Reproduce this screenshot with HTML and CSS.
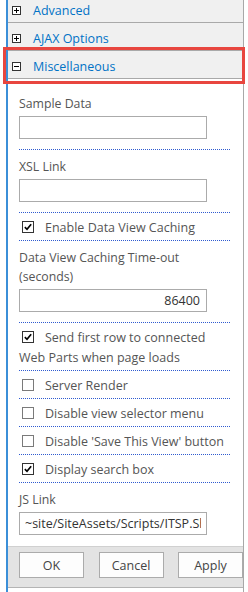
FILE: index.html
```html
<!DOCTYPE html>
<html lang="en">
<head>
    <meta charset="UTF-8">
    <title>Web Part Properties</title>
    <link rel="stylesheet" href="styles.css">
</head>
<body>
    <div class="panel">
        <div class="section-head">
            <span class="toggle"><svg viewBox="0 0 9 9"><path d="M2 4.5 H7 M4.5 2 V7" /></svg></span>
            <span class="section-title">Advanced</span>
        </div>
        <div class="section-head">
            <span class="toggle"><svg viewBox="0 0 9 9"><path d="M2 4.5 H7 M4.5 2 V7" /></svg></span>
            <span class="section-title">AJAX Options</span>
        </div>
        <div class="section-head selected">
            <span class="toggle"><svg viewBox="0 0 9 9"><path d="M2 4.5 H7" /></svg></span>
            <span class="section-title">Miscellaneous</span>
        </div>

        <div class="section-body">
            <div class="field">
                <div class="label">Sample Data</div>
                <input class="text-input" type="text">
            </div>
            <div class="field">
                <div class="label">XSL Link</div>
                <input class="text-input" type="text">
            </div>
            <div class="check-row">
                <span class="check on"><svg viewBox="0 0 12 12"><path d="M2.2 6.2 L4.8 8.8 L9.8 2.6" /></svg></span>Enable Data View Caching
            </div>
            <div class="field">
                <div class="label">Data View Caching Time-out (seconds)</div>
                <input class="text-input num" type="text" value="86400">
            </div>
            <div class="check-row">
                <span class="check on"><svg viewBox="0 0 12 12"><path d="M2.2 6.2 L4.8 8.8 L9.8 2.6" /></svg></span>Send first row to connected Web Parts when page loads
            </div>
            <div class="check-row">
                <span class="check"></span>Server Render
            </div>
            <div class="check-row">
                <span class="check"></span>Disable view selector menu
            </div>
            <div class="check-row">
                <span class="check"></span>Disable 'Save This View' button
            </div>
            <div class="check-row">
                <span class="check on"><svg viewBox="0 0 12 12"><path d="M2.2 6.2 L4.8 8.8 L9.8 2.6" /></svg></span>Display search box
            </div>
            <div class="field last">
                <div class="label">JS Link</div>
                <input class="text-input" type="text" value="~site/SiteAssets/Scripts/ITSP.SharePoint.js">
            </div>
        </div>

        <div class="button-bar">
            <button type="button">OK</button>
            <button type="button">Cancel</button>
            <button type="button">Apply</button>
        </div>
        <div class="tail"></div>
    </div>
</body>
</html>
```

FILE: styles.css
```css
body {
    margin: 0;
    background-color: #ffffff;
    font-family: "Open Sans", "Noto Sans", sans-serif;
    font-size: 12px;
    color: #444444;
    overflow: hidden;
}
.panel {
    margin-top: -5px;
    margin-left: 6px;
    width: 235px;
    border-left: 2px solid #3b8fd8;
    border-right: 1px solid #a8a8a8;
}
.section-head {
    position: relative;
    display: flex;
    align-items: center;
    height: 24px;
    padding: 3px 0 0 4px;
    background-color: #f0f0f0;
    border-bottom: 1px solid #a9a9a9;
}
.section-head.selected::after {
    content: "";
    position: absolute;
    top: -4px;
    bottom: -6px;
    left: -5px;
    right: -2px;
    border: 3px solid #e8463f;
}
.toggle {
    display: block;
    width: 9px;
    height: 9px;
    margin-right: 12px;
}
.toggle svg {
    display: block;
    width: 9px;
    height: 9px;
    background-color: #ffffff;
    box-shadow: inset 0 0 0 1px #333333;
}
.toggle svg path {
    fill: none;
    stroke: #000000;
    stroke-width: 1;
}
.section-title {
    font-size: 12.5px;
    color: #0072c6;
}
.section-body {
    padding: 8px 13px 0 11px;
}
.field {
    padding: 7px 0 10px;
    border-bottom: 1px dotted #2f5bd0;
}
.field.last {
    border-bottom: none;
    padding-bottom: 11px;
}
.label {
    font-size: 12.3px;
    line-height: 19px;
    margin-bottom: 3px;
    color: #555555;
}
.text-input {
    display: block;
    box-sizing: border-box;
    width: 188px;
    height: 23px;
    border: 1px solid #ababab;
    padding: 0 5px;
    font-family: "Open Sans", "Noto Sans", sans-serif;
    font-size: 12.5px;
    color: #333333;
    background-color: #ffffff;
}
.text-input.num {
    text-align: right;
    padding-right: 6px;
}
.check-row {
    padding: 5px 0 2px;
    font-size: 12.5px;
    line-height: 20px;
    color: #555555;
    border-bottom: 1px dotted #2f5bd0;
}
.check {
    display: inline-block;
    box-sizing: border-box;
    width: 12px;
    height: 12px;
    border: 1px solid #7a7a7a;
    margin: 0 11px 0 3px;
    vertical-align: -1px;
    background-color: #ffffff;
}
.check.on {
    border-color: #333333;
}
.check svg {
    display: block;
    width: 10px;
    height: 10px;
}
.check svg path {
    fill: none;
    stroke: #000000;
    stroke-width: 2;
}
.button-bar {
    display: flex;
    justify-content: space-between;
    padding: 5px 0 9px 11px;
    background-color: #e3e3e3;
    border-top: 1px solid #d0d0d0;
    border-bottom: 1px solid #b4b4b4;
}
.button-bar button {
    width: 65px;
    height: 26px;
    border: 1px solid #ababab;
    background-color: #fdfdfd;
    font-family: "Open Sans", "Noto Sans", sans-serif;
    font-size: 12.5px;
    color: #444444;
    padding: 0;
}
.tail {
    height: 10px;
    background-color: #ffffff;
}
```
